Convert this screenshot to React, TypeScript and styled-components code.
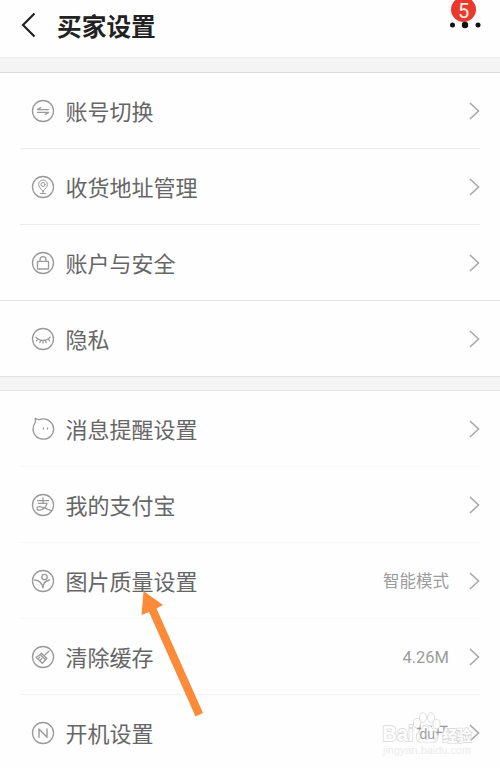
import React from "react";
import styled, { createGlobalStyle } from "styled-components";

const Global = createGlobalStyle`
  * { box-sizing: border-box; }
  html, body { margin: 0; background: #fefefe; overflow: hidden; }
  body { font-family: Roboto, "Noto Sans CJK SC", sans-serif; }
`;

const Screen = styled.main`
  position: relative;
  width: 500px;
  height: 768px;
  overflow: hidden;
  background: #fefefe;
  display: flex;
  flex-direction: column;
`;

const Header = styled.header`
  height: 57px;
  flex: none;
  display: flex;
  align-items: flex-start;
  padding: 11px 18px 0 20px;
`;

const BackIcon = styled.svg`
  width: 17px;
  height: 27px;
  flex: none;
`;

const Title = styled.h1`
  margin: 2px 0 0 20px;
  font-size: 24.7px;
  line-height: 30px;
  font-weight: 700;
  color: #222;
  white-space: nowrap;
`;

const More = styled.div`
  position: relative;
  margin-left: auto;
  width: 34px;
  height: 28px;
`;

const Dots = styled.svg`
  position: absolute;
  inset: 0;
  width: 34px;
  height: 28px;
`;

const Badge = styled.span`
  position: absolute;
  left: 3px;
  top: -14px;
  width: 25px;
  height: 25px;
  border-radius: 50%;
  background: #ea3a2e;
  color: #fff3ec;
  font-size: 20px;
  line-height: 28px;
  text-align: center;
`;

const Band = styled.div<{ $top: string; $bottom: string; $height: number }>`
  flex: none;
  height: ${(p) => p.$height}px;
  background: #f4f4f4;
  border-top: 1px solid ${(p) => p.$top};
  border-bottom: 1px solid ${(p) => p.$bottom};
`;

const List = styled.ul`
  margin: 0;
  padding: 0;
  list-style: none;
  flex: none;
`;

const Row = styled.li<{ $line?: string; $full?: boolean; $last?: boolean }>`
  height: ${(p) => (p.$last ? 75 : 76)}px;
  margin: 0 ${(p) => (p.$full ? 0 : 20)}px;
  padding: 0 ${(p) => (p.$full ? 20 : 0)}px 0 ${(p) => (p.$full ? 31 : 11)}px;
  border-bottom: ${(p) => (p.$last ? "none" : `1px solid ${p.$line}`)};
  display: flex;
  align-items: center;
`;

const RowIcon = styled.svg`
  width: 24px;
  height: 24px;
  flex: none;
  fill: none;
  stroke: #9a9a9a;
  stroke-width: 1.3;
  stroke-linecap: round;
  stroke-linejoin: round;
`;

const Label = styled.span`
  margin-left: 10.5px;
  font-size: 22px;
  line-height: 32px;
  color: #666;
  white-space: nowrap;
  padding-top: 4px;
`;

const Value = styled.span`
  margin-left: auto;
  margin-right: 20px;
  font-size: 16.5px;
  line-height: 24px;
  color: #9c9c9c;
  padding-top: 3px;
`;

const Arrow = styled.svg<{ $push: boolean }>`
  width: 11px;
  height: 18px;
  flex: none;
  margin-left: ${(p) => (p.$push ? "auto" : "0")};
  fill: none;
  stroke: #a8a8a8;
  stroke-width: 1.6;
`;

const Pointer = styled.svg`
  position: absolute;
  left: 135px;
  top: 585px;
  width: 75px;
  height: 138px;
`;

const Watermark = styled.div`
  position: absolute;
  left: 382px;
  top: 712px;
  width: 96px;
  height: 48px;
`;

const WatermarkArt = styled.svg`
  display: block;
  width: 96px;
  height: 48px;
  font-family: "Liberation Sans", "Noto Sans CJK SC", sans-serif;
`;

type IconName = "swap" | "pin" | "lock" | "eye" | "chat" | "pay" | "photo" | "brush" | "n";

const art: Record<IconName, React.ReactNode> = {
  swap: <path d="M17.500 10.600H6.500L9.600 8.600M6.500 13.400h11L14.400 15.400" />,
  pin: (
    <g strokeWidth="1">
      <path d="M12 16.200C9.400 13.400 7.600 11.600 7.600 9.400a4.400 4.400 0 0 1 8.800 0c0 2.200-1.800 4-4.400 6.800Z" />
      <circle cx="12" cy="9.500" r="2" />
      <path d="M12 16.200v1.800M9.300 18.500h5.400" />
    </g>
  ),
  lock: (
    <>
      <rect x="6.500" y="10.300" width="11" height="7.700" rx=".6" />
      <path d="M9 10.300V8.700a3 3 0 0 1 6 0v1.600" />
    </>
  ),
  eye: <path d="M4.800 10.200c3.500 4.200 10.900 4.200 14.400 0M6.700 12l-1.300 1.800M9.500 13.500l-.6 2.200M12 13.700v2.400M14.500 13.500l.6 2.200M17.300 12l1.300 1.800" />,
  chat: (
    <>
      <path d="M4.500 5.200 4.200 1.200c1.300.9 2.600 1.500 4 1.400C9.500 2 10.800 1.800 12.200 1.800A10.300 10.200 0 1 1 2 12c0-2.700 1-4.900 2.500-6.800Z" />
      <path d="M12.400 10.800v1.200M16.500 10.800v1.200" />
    </>
  ),
  pay: (
    <path d="M6.500 7.600h11M12 4.800V10.400M7.400 10.400h8.600c-1 3.400-4 6.200-7 6.800-3.300.5-4-3-1.200-3.600 3.400-.6 6.400 2.400 13 4.200" />
  ),
  photo: (
    <>
      <circle cx="13.500" cy="8" r="2.700" />
      <path d="M3.600 11c4 .2 7.200 2.200 8.400 7.800 0-4.300 2.700-7 6.500-7.800" />
    </>
  ),
  brush: (
    <path d="m17.800 6.200-3.700 3.700M10.500 8.200l5.300 5.300M9.200 9.500l5.300 5.300-3.200 3.400-6.200-5.900 4.100-2.800ZM9 15.500l1.900-2M7.200 13.600l1.700-1.700M10.500 8.200 9.200 9.500M15.800 13.500l-1.300 1.300" />
  ),
  n: <path d="M8 16.200V8l8 8.200V8" strokeWidth="1.400" />,
};

interface Item {
  icon: IconName;
  label: string;
  value?: string;
  line?: string;
  full?: boolean;
}

const account: Item[] = [
  { icon: "swap", label: "账号切换", line: "#ededed" },
  { icon: "pin", label: "收货地址管理", line: "#ededed" },
  { icon: "lock", label: "账户与安全", line: "#e5e5e5", full: true },
  { icon: "eye", label: "隐私" },
];

const general: Item[] = [
  { icon: "chat", label: "消息提醒设置", line: "#f8f8f8" },
  { icon: "pay", label: "我的支付宝", line: "#f8f8f8" },
  { icon: "photo", label: "图片质量设置", value: "智能模式", line: "#f8f8f8" },
  { icon: "brush", label: "清除缓存", value: "4.26M", line: "#f3f3f3" },
  { icon: "n", label: "开机设置", value: "打开" },
];

function Group({ items }: { items: Item[] }) {
  return (
    <List>
      {items.map((item, i) => (
        <Row key={item.label} $line={item.line} $full={item.full} $last={i === items.length - 1}>
          <RowIcon viewBox="0 0 24 24">
            {item.icon !== "chat" && <circle cx="12" cy="12" r="10.500" />}
            {art[item.icon]}
          </RowIcon>
          <Label>{item.label}</Label>
          {item.value && <Value>{item.value}</Value>}
          <Arrow $push={!item.value} viewBox="0 0 11 18">
            <path d="M1 1l8.500 8L1 17" />
          </Arrow>
        </Row>
      ))}
    </List>
  );
}

export default function App() {
  return (
    <>
      <Global />
      <Screen>
        <Header>
          <BackIcon viewBox="0 0 17 27">
            <path d="M14.500 2.500 3 14l11.500 11.500" fill="none" stroke="#222" strokeWidth="2.200" />
          </BackIcon>
          <Title>买家设置</Title>
          <More>
            <Badge>5</Badge>
            <Dots viewBox="0 0 34 28" fill="#111">
              <circle cx="4.500" cy="14" r="2.500" />
              <circle cx="17" cy="14" r="3.200" />
              <circle cx="30" cy="14" r="2.500" />
            </Dots>
          </More>
        </Header>
        <Band $height={16} $top="#efefef" $bottom="#dcdcdc" />
        <Group items={account} />
        <Band $height={15} $top="#e2e2e2" $bottom="#e5e5e5" />
        <Group items={general} />
        <Pointer viewBox="0 0 75 138">
          <path d="M8.500 6 28 20l-6.500 3.500L68 128l-7.500 3.500L14 27 6.500 30Z" fill="#fb8b38" />
        </Pointer>
        <Watermark>
          <WatermarkArt viewBox="0 0 96 48">
            <g fill="#fefefe" stroke="#d8d8d8" strokeWidth="1.600" paintOrder="stroke">
              <text x="0.500" y="29" fontSize="22" fontWeight="700" textLength="31" lengthAdjust="spacingAndGlyphs">Bai</text>
              <ellipse cx="35" cy="11" rx="3.200" ry="4.500" />
              <ellipse cx="41" cy="5.500" rx="3" ry="4.500" />
              <ellipse cx="49" cy="5.500" rx="3" ry="4.500" />
              <ellipse cx="54.500" cy="12" rx="3.200" ry="4.500" />
              <path d="M45 13c4 0 5.500 4.500 8.500 7.500 3.500 3.500 2 9.500-2.500 9.500H39c-4.500 0-6-6-2.500-9.500 3-3 4.500-7.500 8.500-7.500Z" fillOpacity=".8" strokeWidth="1.200" />
              <text x="60.500" y="28.500" fontSize="15" fontWeight="700" textLength="29">经验</text>
            </g>
            <text x="37.500" y="27" fontSize="14" fill="#a0a0a0">du</text>
            <text x="1" y="41.500" fontSize="11" fill="#ececec" textLength="88" lengthAdjust="spacingAndGlyphs">jingyan.baidu.com</text>
          </WatermarkArt>
        </Watermark>
      </Screen>
    </>
  );
}
